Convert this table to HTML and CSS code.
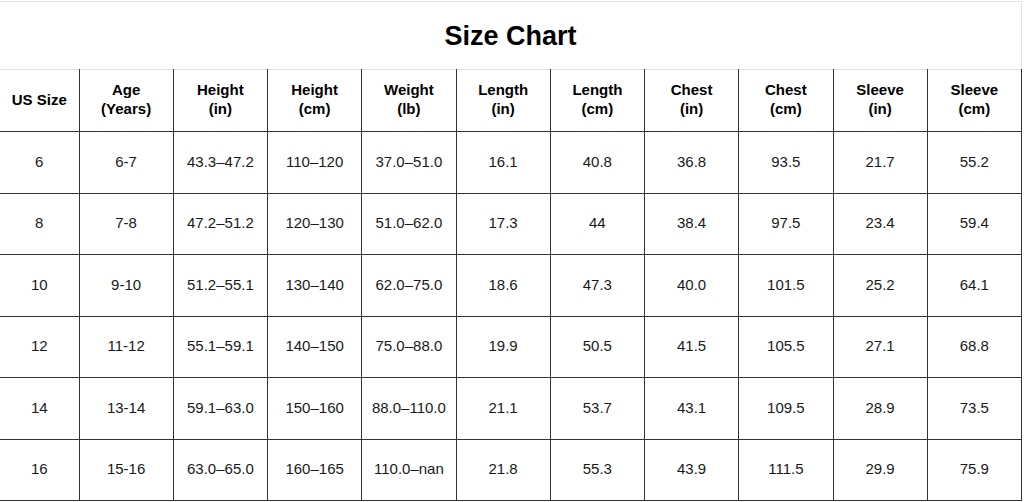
FILE: index.html
```html
<!DOCTYPE html>
<html>
<head>
<meta charset="utf-8">
<link rel="stylesheet" href="styles.css">
</head>
<body>
<div class="page">
  <div class="prev"></div>
  <div class="title">Size Chart</div>
  <table class="chart">
    <colgroup>
      <col class="c-first">
      <col><col><col><col><col><col><col><col><col><col>
    </colgroup>
    <thead>
      <tr>
        <th>US Size</th>
        <th>Age<br>(Years)</th>
        <th>Height<br>(in)</th>
        <th>Height<br>(cm)</th>
        <th>Weight<br>(lb)</th>
        <th>Length<br>(in)</th>
        <th>Length<br>(cm)</th>
        <th>Chest<br>(in)</th>
        <th>Chest<br>(cm)</th>
        <th>Sleeve<br>(in)</th>
        <th>Sleeve<br>(cm)</th>
      </tr>
    </thead>
    <tbody>
      <tr><td>6</td><td>6-7</td><td>43.3–47.2</td><td>110–120</td><td>37.0–51.0</td><td>16.1</td><td>40.8</td><td>36.8</td><td>93.5</td><td>21.7</td><td>55.2</td></tr>
      <tr><td>8</td><td>7-8</td><td>47.2–51.2</td><td>120–130</td><td>51.0–62.0</td><td>17.3</td><td>44</td><td>38.4</td><td>97.5</td><td>23.4</td><td>59.4</td></tr>
      <tr><td>10</td><td>9-10</td><td>51.2–55.1</td><td>130–140</td><td>62.0–75.0</td><td>18.6</td><td>47.3</td><td>40.0</td><td>101.5</td><td>25.2</td><td>64.1</td></tr>
      <tr><td>12</td><td>11-12</td><td>55.1–59.1</td><td>140–150</td><td>75.0–88.0</td><td>19.9</td><td>50.5</td><td>41.5</td><td>105.5</td><td>27.1</td><td>68.8</td></tr>
      <tr><td>14</td><td>13-14</td><td>59.1–63.0</td><td>150–160</td><td>88.0–110.0</td><td>21.1</td><td>53.7</td><td>43.1</td><td>109.5</td><td>28.9</td><td>73.5</td></tr>
      <tr><td>16</td><td>15-16</td><td>63.0–65.0</td><td>160–165</td><td>110.0–nan</td><td>21.8</td><td>55.3</td><td>43.9</td><td>111.5</td><td>29.9</td><td>75.9</td></tr>
    </tbody>
  </table>
</div>
</body>
</html>
```
FILE: styles.css
```css
html, body {
  margin: 0;
  padding: 0;
  background: #ffffff;
}

.page {
  width: 1022px;
  font-family: "Liberation Sans", Arial, sans-serif;
  color: #111;
}

.prev {
  height: 1px;
  border-bottom: 1px solid #e2e2e2;
}

.title {
  height: 67px;
  box-sizing: border-box;
  border-right: 1px solid #e2e2e2;
  display: flex;
  align-items: center;
  justify-content: center;
  font-size: 27px;
  font-weight: bold;
  color: #000;
  padding-top: 2px;
}

.chart {
  width: 1022px;
  border-collapse: collapse;
  table-layout: fixed;
}

.c-first {
  width: 79px;
}

.chart th,
.chart td {
  border: 1px solid #333333;
  text-align: center;
  vertical-align: middle;
  padding: 0;
  font-size: 15px;
  line-height: 19px;
}

.chart tr > :first-child {
  border-left: none;
}

.chart thead th {
  height: 58px;
  padding-bottom: 3px;
  border-top: 1px solid #e2e2e2;
  font-weight: bold;
  color: #000;
}

.chart tbody td {
  height: 58.5px;
  padding-bottom: 2px;
  color: #1a1a1a;
}
```
